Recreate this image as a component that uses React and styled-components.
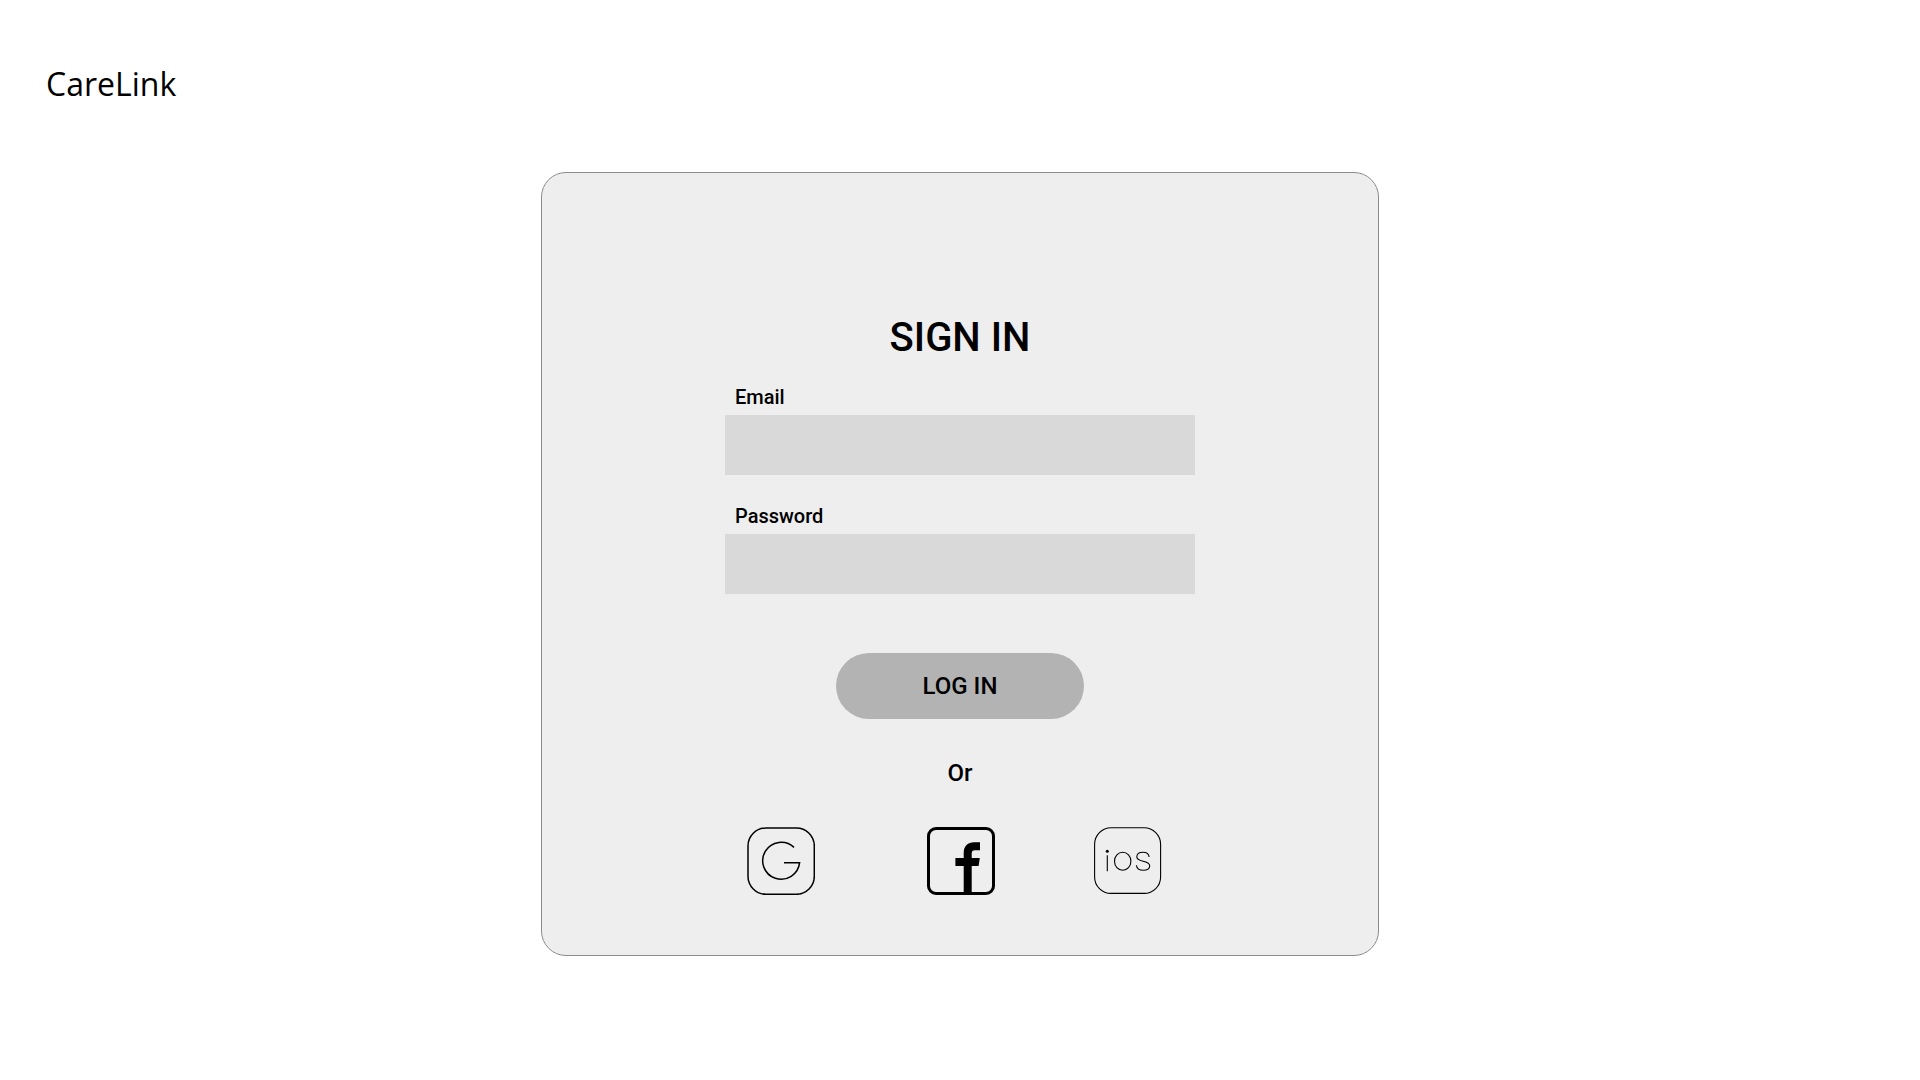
import React from "react";
import styled, { createGlobalStyle } from "styled-components";

const GlobalStyle = createGlobalStyle`
  *, *::before, *::after { box-sizing: border-box; }
  body {
    margin: 0;
    background: #ffffff;
    color: #000000;
    font-family: Roboto, "Liberation Sans", sans-serif;
  }
`;

const Page = styled.div`
  min-height: 100vh;
  display: flex;
  flex-direction: column;
`;

const Header = styled.header`
  padding: 62px 46px 66px;
`;

const Brand = styled.a`
  display: inline-block;
  vertical-align: top;
  color: inherit;
  text-decoration: none;
  font-family: "Open Sans", "Noto Sans", sans-serif;
  font-size: 32px;
  line-height: 44px;
`;

const Main = styled.main`
  display: flex;
  justify-content: center;
  padding: 0 24px 48px;
`;

const Card = styled.section`
  width: 100%;
  max-width: 838px;
  padding: 141px 24px 60px;
  display: flex;
  flex-direction: column;
  align-items: center;
  background: #eeeeee;
  border: 1px solid #8c8c8c;
  border-radius: 25px;
`;

const Title = styled.h1`
  margin: 0 0 23px;
  font-size: 40px;
  line-height: 48px;
  font-weight: 500;
`;

const Form = styled.form`
  width: 100%;
  max-width: 470px;
  display: flex;
  flex-direction: column;
  gap: 29px;
`;

const Field = styled.div`
  display: flex;
  flex-direction: column;
  gap: 6px;
`;

const Label = styled.label`
  padding: 0 10px;
  font-size: 20px;
  line-height: 24px;
  font-weight: 500;
`;

const Input = styled.input`
  width: 100%;
  height: 60px;
  padding: 0 10px;
  border: 0;
  border-radius: 0;
  background: #d9d9d9;
  color: inherit;
  font: inherit;
  font-size: 20px;
`;

const SubmitButton = styled.button`
  align-self: center;
  width: 248px;
  height: 66px;
  margin-top: 30px;
  padding: 0;
  border: 0;
  border-radius: 33px;
  background: #b3b3b3;
  color: inherit;
  font-family: inherit;
  font-size: 24px;
  line-height: 28px;
  font-weight: 500;
  cursor: pointer;
`;

const Divider = styled.p`
  margin: 40px 0;
  font-size: 24px;
  line-height: 28px;
  font-weight: 500;
`;

const Providers = styled.nav`
  width: 100%;
  max-width: 470px;
  padding-left: 22px;
  display: grid;
  grid-template-columns: 180px 167px 68px;
`;

const ProviderLink = styled.a`
  width: 68px;
  height: 68px;
  color: inherit;
`;

const Logo = styled.svg`
  display: block;
  width: 68px;
  height: 68px;
  fill: none;
  stroke: #000000;
  stroke-width: ${({ $weight }) => $weight};
`;

function GoogleLogo() {
  return (
    <Logo viewBox="0 0 68 68" $weight="1.5" aria-hidden="true">
      <rect x="1" y="1" width="66.3" height="66.3" rx="18" />
      <path d="M47 20.4A18.5 18.5 0 1 0 52.6 35.7H37" />
    </Logo>
  );
}

function FacebookLogo() {
  return (
    <Logo viewBox="0 0 68 68" $weight="3" aria-hidden="true">
      <rect x="1.5" y="1.5" width="65" height="65" rx="7.5" />
      <path
        d="M36.7 66V39H28.4V31H36.7V26C36.7 19 41 15.3 47 15.3H53V23.3H48C45.6 23.3 44.7 24.5 44.7 26.6V31H52.8L51.6 39H44.7V66Z"
        fill="#000000"
        stroke="none"
      />
    </Logo>
  );
}

function IosLogo() {
  return (
    <Logo viewBox="0 0 68 68" $weight="1.1" aria-hidden="true">
      <rect x="0.6" y="0.7" width="66" height="65.7" rx="16.5" />
      <circle cx="13.3" cy="24.3" r="1.5" fill="#000000" stroke="none" />
      <path d="M13.3 28.2V44.3" />
      <ellipse cx="28.7" cy="34.2" rx="8.2" ry="9" />
      <path d="M55.2 30C54.8 27 52.4 25.2 49 25.2C45.4 25.2 42.8 27 42.8 29.8C42.8 32.4 44.6 33.3 49 34.2C53.6 35.1 55.7 36.2 55.7 38.8C55.7 41.6 53 43.3 49.3 43.3C45.4 43.3 42.8 41.4 42.4 38.2" />
    </Logo>
  );
}

const fields = [
  { id: "email", label: "Email", type: "email", autoComplete: "email" },
  { id: "password", label: "Password", type: "password", autoComplete: "current-password" },
];

const providers = [
  { name: "Google", Mark: GoogleLogo },
  { name: "Facebook", Mark: FacebookLogo },
  { name: "iOS", Mark: IosLogo },
];

export default function App() {
  return (
    <>
      <GlobalStyle />
      <Page>
        <Header>
          <Brand href="#">CareLink</Brand>
        </Header>
        <Main>
          <Card>
            <Title>SIGN IN</Title>
            <Form onSubmit={(event) => event.preventDefault()}>
              {fields.map(({ id, label, type, autoComplete }) => (
                <Field key={id}>
                  <Label htmlFor={id}>{label}</Label>
                  <Input id={id} name={id} type={type} autoComplete={autoComplete} />
                </Field>
              ))}
              <SubmitButton type="submit">LOG IN</SubmitButton>
            </Form>
            <Divider>Or</Divider>
            <Providers>
              {providers.map(({ name, Mark }) => (
                <ProviderLink key={name} href="#" aria-label={name}>
                  <Mark />
                </ProviderLink>
              ))}
            </Providers>
          </Card>
        </Main>
      </Page>
    </>
  );
}
